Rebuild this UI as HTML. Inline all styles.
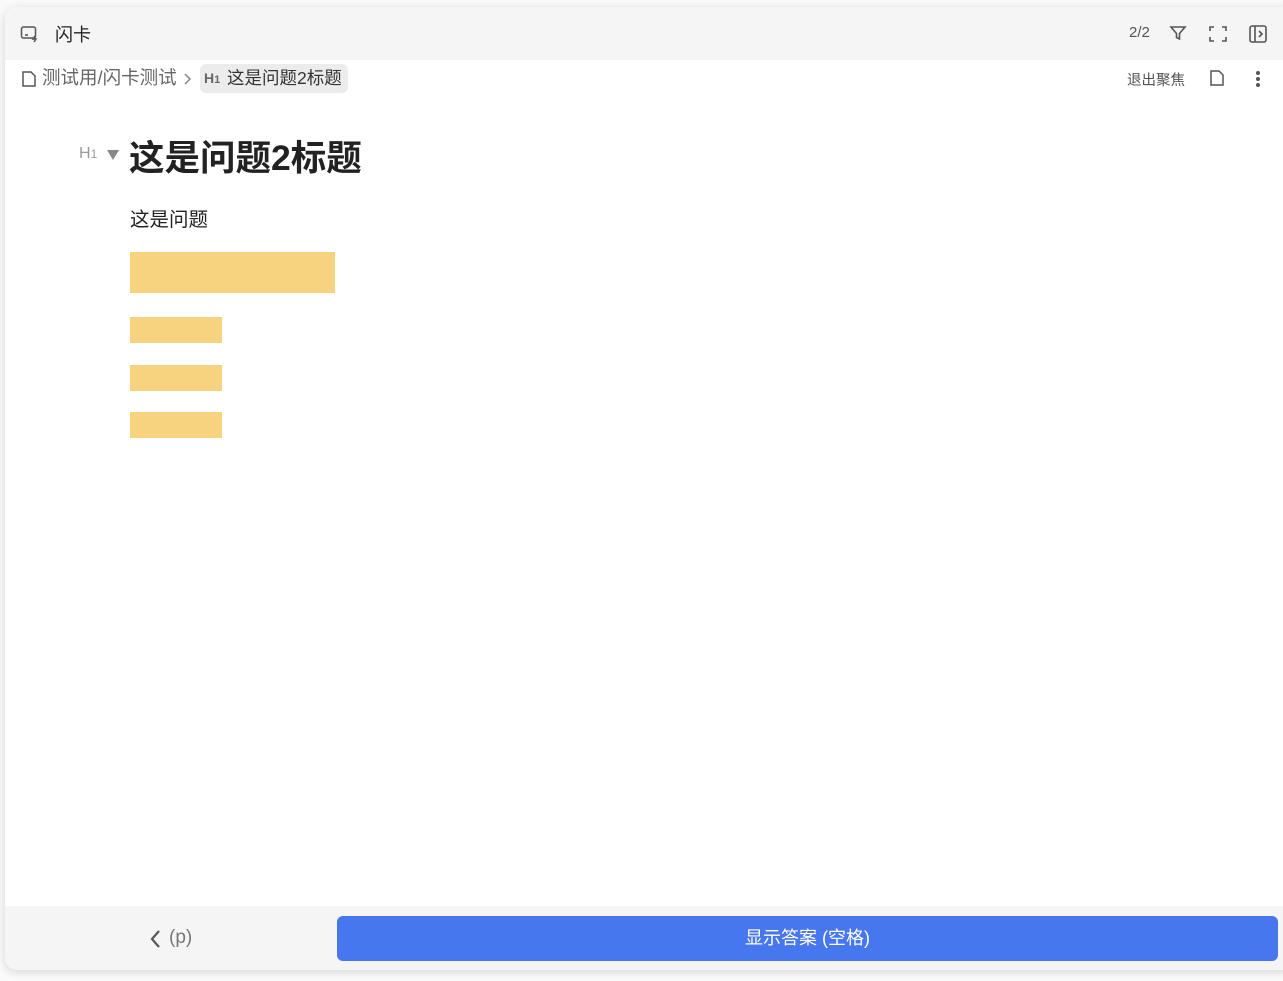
<!DOCTYPE html>
<html><head><meta charset="utf-8"><style>
*{margin:0;padding:0;box-sizing:border-box}
body{width:1283px;height:981px;background:#fafafa;font-family:"Liberation Sans","Noto Sans CJK SC",sans-serif;position:relative;overflow:hidden}
.dlg{position:absolute;left:5px;top:7px;width:1290px;height:963px;background:#fff;border-radius:12px;box-shadow:0 2px 10px rgba(0,0,0,.15);overflow:hidden}
.hd{position:absolute;left:0;top:0;width:100%;height:53px;background:#f5f5f5}
.ft{position:absolute;left:0;top:899px;width:100%;height:64px;background:#f5f5f5}
.a{position:absolute;white-space:nowrap}
.y{position:absolute;background:#f7d37f;left:125px}
</style></head><body>
<div class="dlg">
<div class="hd"></div>
<svg class="a" style="left:15px;top:18px" width="20" height="18" viewBox="0 0 20 18" fill="none" stroke="#555" stroke-width="1.5"><rect x="1.5" y="2" width="14" height="11" rx="2"/><path d="M5 10h3M15 11l-2 3h3l-2 3"/></svg>
<div class="a" style="left:50px;top:14px;font-size:18px;color:#222">闪卡</div>
<div class="a" style="left:1124px;top:17px;font-size:15px;color:#555">2/2</div>
<svg class="a" style="left:1164px;top:17px" width="18" height="18" viewBox="0 0 18 18" fill="none" stroke="#555" stroke-width="1.6"><path d="M2 3h14l-5.5 6.5V15l-3-1.5V9.5z"/></svg>
<svg class="a" style="left:1203px;top:17px" width="20" height="20" viewBox="0 0 20 20" fill="none" stroke="#555" stroke-width="1.6"><path d="M2 7V3h4M14 3h4v4M18 13v4h-4M6 17H2v-4"/></svg>
<svg class="a" style="left:1243px;top:17px" width="20" height="20" viewBox="0 0 20 20" fill="none" stroke="#555" stroke-width="1.6"><rect x="2" y="2" width="16" height="16" rx="2"/><path d="M7 2v16M11 7l3 3-3 3"/></svg>
<svg class="a" style="left:16px;top:63px" width="16" height="18" viewBox="0 0 16 18" fill="none" stroke="#555" stroke-width="1.5"><path d="M2 2h8l4 4v10H2z"/></svg>
<div class="a" style="left:37px;top:57px;font-size:18.5px;color:#666">测试用/闪卡测试</div>
<svg class="a" style="left:177px;top:64px" width="10" height="16" viewBox="0 0 10 16" fill="none" stroke="#888" stroke-width="1.5"><path d="M3 3l5 5-5 5"/></svg>
<div class="a" style="left:195px;top:57px;width:148px;height:29px;background:#ececec;border-radius:6px"></div>
<div class="a" style="left:199px;top:63px;font-size:14px;color:#666;font-weight:bold">H<span style="font-size:11px">1</span></div>
<div class="a" style="left:222px;top:58px;font-size:17.5px;color:#333">这是问题2标题</div>
<div class="a" style="left:1122px;top:62px;font-size:14.5px;color:#555">退出聚焦</div>
<svg class="a" style="left:1204px;top:62px" width="16" height="18" viewBox="0 0 16 18" fill="none" stroke="#555" stroke-width="1.5"><path d="M2 2h8l4 4v10H2z"/></svg>
<div class="a" style="left:1251px;top:64px;width:4px;height:4px;border-radius:2px;background:#555;box-shadow:0 6px 0 #555,0 12px 0 #555"></div>
<div class="a" style="left:74px;top:138px;font-size:16px;color:#999">H<span style="font-size:12px">1</span></div>
<div class="a" style="left:102px;top:143px;width:0;height:0;border-left:6px solid transparent;border-right:6px solid transparent;border-top:10px solid #888"></div>
<div class="a" style="left:124px;top:123px;font-size:35.5px;font-weight:bold;color:#222">这是问题2标题</div>
<div class="a" style="left:125px;top:196px;font-size:19.5px;color:#222">这是问题</div>
<div class="y" style="top:245px;width:205px;height:41px"></div>
<div class="y" style="top:310px;width:92px;height:26px"></div>
<div class="y" style="top:358px;width:92px;height:26px"></div>
<div class="y" style="top:405px;width:92px;height:26px"></div>
<div class="ft"></div>
<svg class="a" style="left:143px;top:921px" width="14" height="22" viewBox="0 0 14 22" fill="none" stroke="#555" stroke-width="2.2"><path d="M11 3L4 11l7 8"/></svg>
<div class="a" style="left:164px;top:920px;font-size:19px;color:#777">(p)</div>
<div class="a" style="left:332px;top:909px;width:941px;height:45px;background:#4677ee;border-radius:6px;color:#fff;font-size:18px;text-align:center;line-height:45px">显示答案 (空格)</div>
</div>
</body></html>
